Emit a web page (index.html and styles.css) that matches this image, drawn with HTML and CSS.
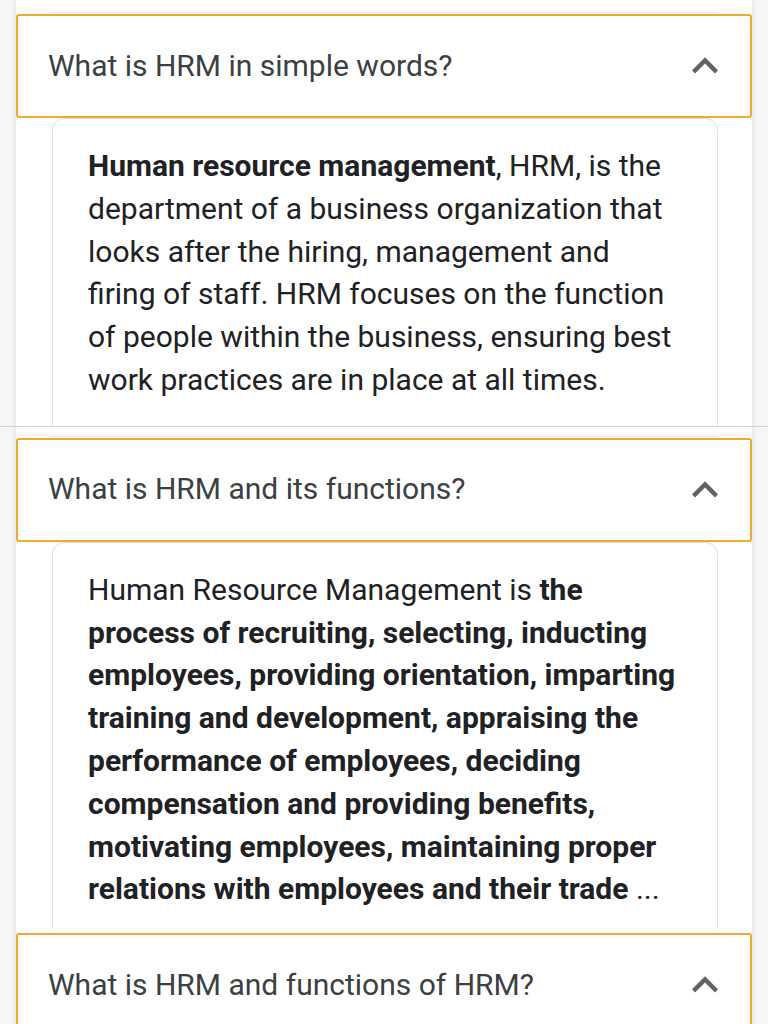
FILE: index.html
```html
<!DOCTYPE html>
<html lang="en">
<head>
<meta charset="utf-8">
<title>People also ask</title>
<link rel="stylesheet" href="styles.css">
</head>
<body>
<div class="page">
  <div class="ghost"></div>
  <div class="item">
    <div class="q">
      <span class="q-text">What is HRM in simple words?</span>
      <svg class="chev" viewBox="0 0 24 24" width="52" height="52"><path d="M12 8l-6 6 1.41 1.41L12 10.83l4.59 4.58L18 14z"/></svg>
    </div>
    <div class="a a-first">
      <p><b>Human resource management</b>, HRM, is the department of a business organization that looks after the hiring, management and firing of staff. HRM focuses on the function of people within the business, ensuring best work practices are in place at all times.</p>
    </div>
  </div>
  <div class="rule"></div>
  <div class="ghost ghost-b"></div>
  <div class="item">
    <div class="q">
      <span class="q-text">What is HRM and its functions?</span>
      <svg class="chev" viewBox="0 0 24 24" width="52" height="52"><path d="M12 8l-6 6 1.41 1.41L12 10.83l4.59 4.58L18 14z"/></svg>
    </div>
    <div class="a a-second">
      <p>Human Resource Management is <b>the process of recruiting, selecting, inducting employees, providing orientation, imparting training and development, appraising the performance of employees, deciding compensation and providing benefits, motivating employees, maintaining proper relations with employees and their trade</b> ...</p>
    </div>
  </div>
  <div class="item item-last">
    <div class="q">
      <span class="q-text">What is HRM and functions of HRM?</span>
      <svg class="chev" viewBox="0 0 24 24" width="52" height="52"><path d="M12 8l-6 6 1.41 1.41L12 10.83l4.59 4.58L18 14z"/></svg>
    </div>
  </div>
</div>
</body>
</html>
```

FILE: styles.css
```css
html, body {
  margin: 0;
  padding: 0;
}
body {
  background: #f6f6f6;
  font-family: Roboto, "Liberation Sans", Arial, sans-serif;
  overflow: hidden;
}
.page {
  margin: 0 16px;
  background: #fff;
  padding-top: 12px;
  min-height: 1024px;
  box-shadow: 0 0 5px rgba(0, 0, 0, 0.12);
}
.ghost {
  height: 1px;
  margin: 0 34px 1px 34px;
  background: #ececec;
}
.ghost-b {
  margin-top: 9px;
}
.rule {
  height: 1px;
  margin: 0 -16px;
  background: #d2d2d2;
}
.q {
  box-sizing: border-box;
  height: 104px;
  border: 2px solid #f1a935;
  border-radius: 3px;
  display: flex;
  align-items: center;
  justify-content: space-between;
  padding: 0 19px 2px 30px;
}
.q-text {
  font-size: 30px;
  color: #3c4043;
  letter-spacing: 0;
}
.chev {
  fill: #5f6368;
  display: block;
  margin-top: 2px;
}
.a {
  margin: 0 34px 0 36px;
  border: 1px solid #dfe1e5;
  border-bottom: none;
  border-radius: 13px 13px 0 0;
  padding: 26px 37px 0 35px;
}
.a p {
  margin: 0;
  font-size: 30px;
  line-height: 42.8px;
  color: #202124;
}
.a b {
  font-weight: 700;
}
.a-first {
  padding-bottom: 24px;
}
.a-second {
  padding-bottom: 18px;
  margin-bottom: 4px;
}
```
